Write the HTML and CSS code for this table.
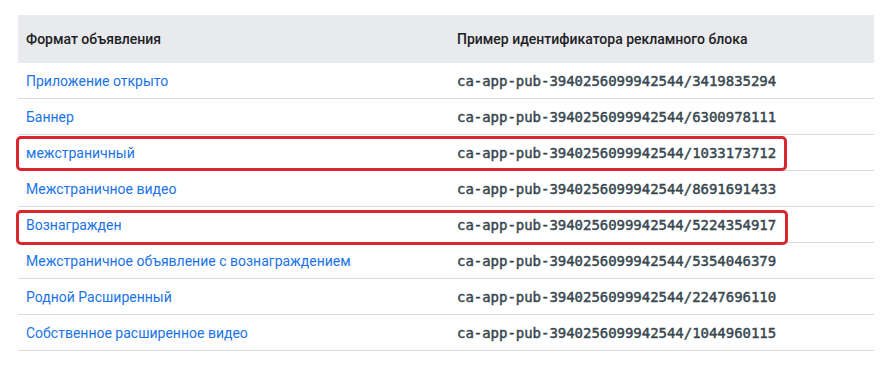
FILE: index.html
```html
<!DOCTYPE html>
<html lang="ru">
<head>
<meta charset="utf-8">
<link rel="stylesheet" href="styles.css">
</head>
<body>
<div class="wrap">
  <table class="ids">
    <thead>
      <tr><th class="c1">Формат объявления</th><th>Пример идентификатора рекламного блока</th></tr>
    </thead>
    <tbody>
      <tr><td><a>Приложение открыто</a></td><td><code>ca-app-pub-3940256099942544/3419835294</code></td></tr>
      <tr><td><a>Баннер</a></td><td><code>ca-app-pub-3940256099942544/6300978111</code></td></tr>
      <tr><td><a>межстраничный</a></td><td><code>ca-app-pub-3940256099942544/1033173712</code></td></tr>
      <tr><td><a>Межстраничное видео</a></td><td><code>ca-app-pub-3940256099942544/8691691433</code></td></tr>
      <tr><td><a>Вознагражден</a></td><td><code>ca-app-pub-3940256099942544/5224354917</code></td></tr>
      <tr><td><a>Межстраничное объявление с вознаграждением</a></td><td><code>ca-app-pub-3940256099942544/5354046379</code></td></tr>
      <tr><td><a>Родной Расширенный</a></td><td><code>ca-app-pub-3940256099942544/2247696110</code></td></tr>
      <tr><td><a>Собственное расширенное видео</a></td><td><code>ca-app-pub-3940256099942544/1044960115</code></td></tr>
    </tbody>
  </table>
  <div class="mark mark-1"></div>
  <div class="mark mark-2"></div>
</div>
</body>
</html>
```
FILE: styles.css
```css
html, body {
  margin: 0;
  padding: 0;
  background: #ffffff;
}
body {
  font-family: Roboto, "Noto Sans", sans-serif;
  font-size: 14px;
  color: #202124;
}
.wrap {
  position: relative;
  padding: 15px 18px;
}
.ids {
  width: 856px;
  border-collapse: collapse;
  table-layout: fixed;
}
.ids th {
  background: #e8eaed;
  height: 48px;
  padding: 0 8px;
  text-align: left;
  font-weight: 500;
  color: #202124;
  vertical-align: middle;
}
.ids th.c1 {
  width: 415px;
}
.ids td {
  height: 35px;
  padding: 0 8px;
  border-bottom: 1px solid #dadce0;
  vertical-align: middle;
}
.ids a {
  color: #1a73e8;
  text-decoration: none;
}
.ids code {
  font-family: "DejaVu Sans Mono", "Liberation Mono", monospace;
  font-size: 14px;
  font-weight: 400;
  color: #37474f;
  -webkit-text-stroke: 0.45px #37474f;
  letter-spacing: -0.03px;
}
.mark {
  position: absolute;
  left: 16px;
  height: 35px;
  border: 3px solid #d9262f;
  border-radius: 5px;
  box-sizing: border-box;
}
.mark-1 {
  top: 136px;
  width: 771px;
}
.mark-2 {
  top: 210px;
  width: 772px;
}
```
